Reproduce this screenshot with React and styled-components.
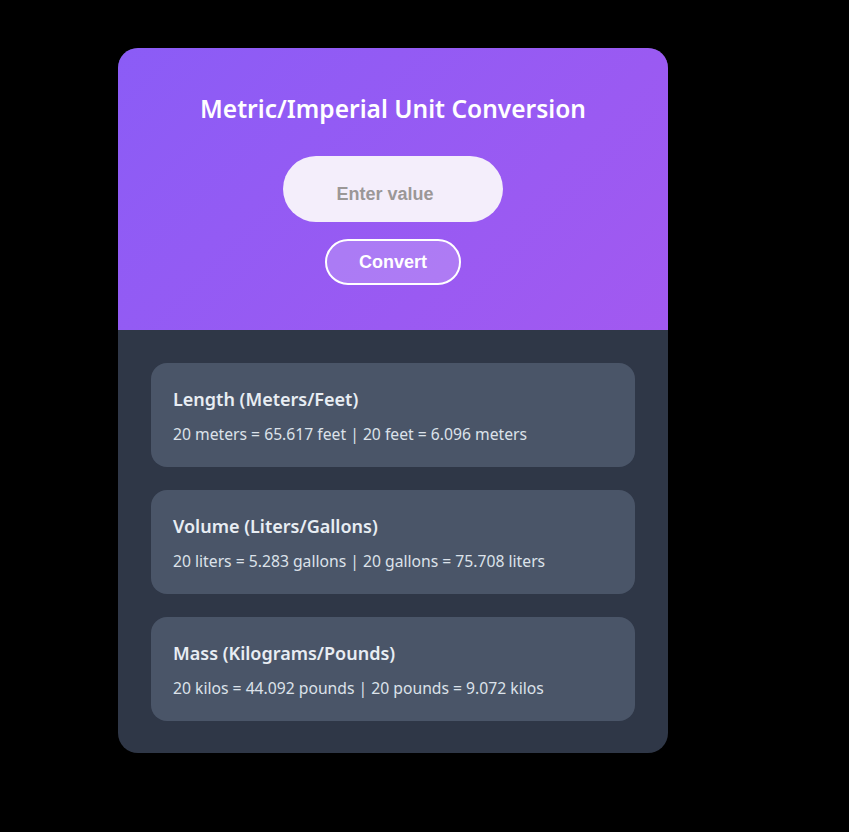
import React, { useState } from "react";
import styled, { createGlobalStyle } from "styled-components";

const GlobalStyle = createGlobalStyle`
  html, body {
    margin: 0;
    padding: 0;
    background: #000;
  }
  body {
    font-family: "Noto Sans", "Open Sans", sans-serif;
  }
`;

const Page = styled.div`
  min-height: 100vh;
  padding: 48px 0 0 118px;
  box-sizing: border-box;
`;

const Card = styled.div`
  width: 550px;
  border-radius: 20px;
  overflow: hidden;
  background: #2f3747;
`;

const Header = styled.div`
  height: 282px;
  box-sizing: border-box;
  padding-top: 44px;
  display: flex;
  flex-direction: column;
  align-items: center;
  background: linear-gradient(135deg, #8b5cf6 0%, #a259f0 100%);
`;

const Title = styled.h1`
  margin: 0 0 30px;
  font-size: 24.5px;
  font-weight: 600;
  line-height: 34px;
  color: #fff;
`;

const Input = styled.input`
  width: 220px;
  height: 66px;
  box-sizing: border-box;
  padding: 10px 16px 0 0;
  border: none;
  border-radius: 33px;
  background: #f4eefb;
  text-align: center;
  font-family: "Liberation Sans", Arial, sans-serif;
  font-size: 18px;
  font-weight: 700;
  color: #333;
  outline: none;
  &::placeholder {
    color: #9b9797;
  }
`;

const Button = styled.button`
  margin-top: 17px;
  width: 136px;
  height: 46px;
  border: 2px solid #fff;
  border-radius: 23px;
  background: rgba(255, 255, 255, 0.2);
  color: #fff;
  font-family: "Liberation Sans", Arial, sans-serif;
  font-size: 18px;
  font-weight: 700;
  cursor: pointer;
`;

const Results = styled.div`
  padding: 33px 33px 32px;
  display: flex;
  flex-direction: column;
  gap: 23px;
`;

const Result = styled.div`
  height: 104px;
  box-sizing: border-box;
  padding: 24px 22px;
  border-radius: 16px;
  background: #4a5568;
`;

const ResultTitle = styled.h3`
  margin: 0 0 11px;
  font-size: 18px;
  font-weight: 600;
  line-height: 25px;
  color: #e8edf3;
`;

const ResultText = styled.p`
  margin: 0;
  font-size: 15.7px;
  line-height: 22px;
  color: #dce2ea;
`;

const results = [
  {
    title: "Length (Meters/Feet)",
    text: "20 meters = 65.617 feet | 20 feet = 6.096 meters",
  },
  {
    title: "Volume (Liters/Gallons)",
    text: "20 liters = 5.283 gallons | 20 gallons = 75.708 liters",
  },
  {
    title: "Mass (Kilograms/Pounds)",
    text: "20 kilos = 44.092 pounds | 20 pounds = 9.072 kilos",
  },
];

export default function App() {
  const [value, setValue] = useState("");
  return (
    <>
      <GlobalStyle />
      <Page>
        <Card>
          <Header>
            <Title>Metric/Imperial Unit Conversion</Title>
            <Input
              placeholder="Enter value"
              value={value}
              onChange={(e) => setValue(e.target.value)}
            />
            <Button>Convert</Button>
          </Header>
          <Results>
            {results.map((r) => (
              <Result key={r.title}>
                <ResultTitle>{r.title}</ResultTitle>
                <ResultText>{r.text}</ResultText>
              </Result>
            ))}
          </Results>
        </Card>
      </Page>
    </>
  );
}
